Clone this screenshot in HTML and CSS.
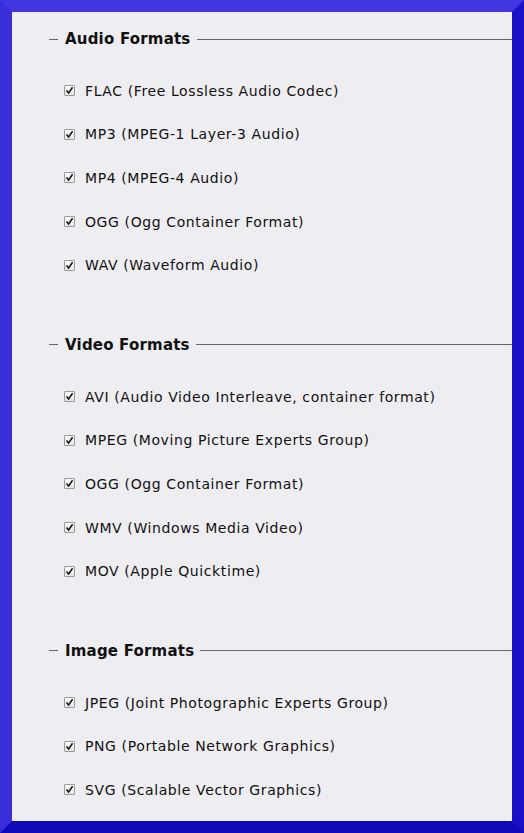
FILE: index.html
```html
<!DOCTYPE html>
<html>
<head>
<meta charset="utf-8">
<link rel="stylesheet" href="styles.css">
</head>
<body>
<main class="page">
  <section class="group">
    <div class="legend"><span class="dash"></span><span class="title">Audio Formats</span><span class="rule"></span></div>
    <ul class="items">
      <li class="item"><span class="box"><svg viewBox="0 0 11 11" width="11" height="11"><path d="M2.5 5.5 L4.6 8 L8.6 2.3" fill="none" stroke="#111" stroke-width="1.5"/></svg></span>FLAC (Free Lossless Audio Codec)</li>
      <li class="item"><span class="box"><svg viewBox="0 0 11 11" width="11" height="11"><path d="M2.5 5.5 L4.6 8 L8.6 2.3" fill="none" stroke="#111" stroke-width="1.5"/></svg></span>MP3 (MPEG-1 Layer-3 Audio)</li>
      <li class="item"><span class="box"><svg viewBox="0 0 11 11" width="11" height="11"><path d="M2.5 5.5 L4.6 8 L8.6 2.3" fill="none" stroke="#111" stroke-width="1.5"/></svg></span>MP4 (MPEG-4 Audio)</li>
      <li class="item"><span class="box"><svg viewBox="0 0 11 11" width="11" height="11"><path d="M2.5 5.5 L4.6 8 L8.6 2.3" fill="none" stroke="#111" stroke-width="1.5"/></svg></span>OGG (Ogg Container Format)</li>
      <li class="item"><span class="box"><svg viewBox="0 0 11 11" width="11" height="11"><path d="M2.5 5.5 L4.6 8 L8.6 2.3" fill="none" stroke="#111" stroke-width="1.5"/></svg></span>WAV (Waveform Audio)</li>
    </ul>
  </section>
  <section class="group">
    <div class="legend"><span class="dash"></span><span class="title">Video Formats</span><span class="rule"></span></div>
    <ul class="items">
      <li class="item"><span class="box"><svg viewBox="0 0 11 11" width="11" height="11"><path d="M2.5 5.5 L4.6 8 L8.6 2.3" fill="none" stroke="#111" stroke-width="1.5"/></svg></span>AVI (Audio Video Interleave, container format)</li>
      <li class="item"><span class="box"><svg viewBox="0 0 11 11" width="11" height="11"><path d="M2.5 5.5 L4.6 8 L8.6 2.3" fill="none" stroke="#111" stroke-width="1.5"/></svg></span>MPEG (Moving Picture Experts Group)</li>
      <li class="item"><span class="box"><svg viewBox="0 0 11 11" width="11" height="11"><path d="M2.5 5.5 L4.6 8 L8.6 2.3" fill="none" stroke="#111" stroke-width="1.5"/></svg></span>OGG (Ogg Container Format)</li>
      <li class="item"><span class="box"><svg viewBox="0 0 11 11" width="11" height="11"><path d="M2.5 5.5 L4.6 8 L8.6 2.3" fill="none" stroke="#111" stroke-width="1.5"/></svg></span>WMV (Windows Media Video)</li>
      <li class="item"><span class="box"><svg viewBox="0 0 11 11" width="11" height="11"><path d="M2.5 5.5 L4.6 8 L8.6 2.3" fill="none" stroke="#111" stroke-width="1.5"/></svg></span>MOV (Apple Quicktime)</li>
    </ul>
  </section>
  <section class="group">
    <div class="legend"><span class="dash"></span><span class="title">Image Formats</span><span class="rule"></span></div>
    <ul class="items">
      <li class="item"><span class="box"><svg viewBox="0 0 11 11" width="11" height="11"><path d="M2.5 5.5 L4.6 8 L8.6 2.3" fill="none" stroke="#111" stroke-width="1.5"/></svg></span>JPEG (Joint Photographic Experts Group)</li>
      <li class="item"><span class="box"><svg viewBox="0 0 11 11" width="11" height="11"><path d="M2.5 5.5 L4.6 8 L8.6 2.3" fill="none" stroke="#111" stroke-width="1.5"/></svg></span>PNG (Portable Network Graphics)</li>
      <li class="item"><span class="box"><svg viewBox="0 0 11 11" width="11" height="11"><path d="M2.5 5.5 L4.6 8 L8.6 2.3" fill="none" stroke="#111" stroke-width="1.5"/></svg></span>SVG (Scalable Vector Graphics)</li>
    </ul>
  </section>
</main>
</body>
</html>
```
FILE: styles.css
```css
html {
  margin: 0;
  padding: 0;
  height: 100%;
  box-sizing: border-box;
  border-style: solid;
  border-width: 12px;
  border-top-color: #4136e2;
  border-left-color: #3a2edb;
  border-right-color: #1a10c6;
  border-bottom-color: #110ab8;
  background: #eeedf2;
  overflow: hidden;
}
body {
  margin: 0;
  height: 100%;
  background: #eeedf2;
  font-family: "DejaVu Sans", sans-serif;
  font-size: 14px;
  color: #111;
}
.page {
  padding: 17px 0 0 37px;
}
.group {
  margin-bottom: 48px;
}
.group:last-child {
  margin-bottom: 0;
}
.legend {
  display: flex;
  align-items: center;
  height: 20px;
}
.dash {
  width: 9px;
  height: 1px;
  background: #666;
}
.title {
  padding: 0 6px 0 7px;
  font-weight: bold;
  font-size: 15px;
  letter-spacing: 0.2px;
}
.rule {
  flex: 1;
  height: 1px;
  background: #666;
}
.items {
  list-style: none;
  margin: 20px 0 0;
  padding: 0 0 0 15px;
}
.item {
  display: flex;
  align-items: center;
  height: 43.6px;
  letter-spacing: 0.6px;
}
.box {
  width: 11px;
  height: 11px;
  box-sizing: border-box;
  border: 1px solid #9a9a9a;
  border-radius: 1px;
  background: linear-gradient(#fdfdfd, #e6e6e6);
  margin-right: 10px;
  display: flex;
  align-items: center;
  justify-content: center;
}
.box svg {
  display: block;
  flex: none;
}
```
